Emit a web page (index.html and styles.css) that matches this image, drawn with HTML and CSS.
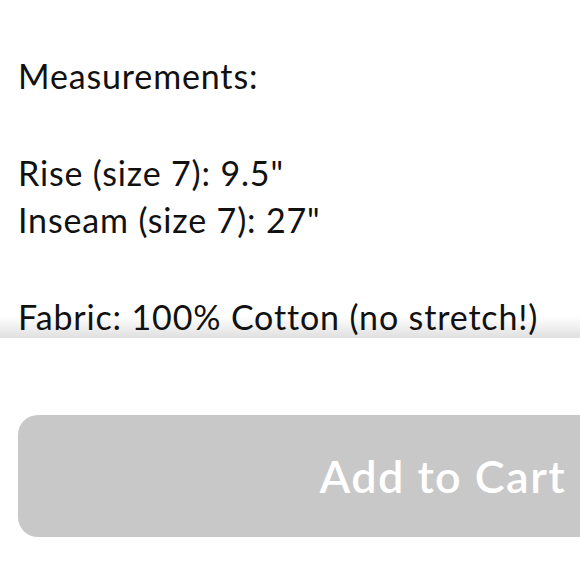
FILE: index.html
```html
<!DOCTYPE html>
<html>
<head>
<meta charset="utf-8">
<link rel="stylesheet" href="styles.css">
</head>
<body>
<div class="screen">
  <div class="details">
    <p class="para">Measurements:</p>
    <p class="para">Rise (size 7): 9.5"<br>Inseam (size 7): 27"</p>
    <p class="para">Fabric: 100% Cotton (no stretch!)</p>
  </div>
  <div class="footer">
    <button class="cart-btn">Add to Cart</button>
  </div>
</div>
</body>
</html>
```
FILE: styles.css
```css
html, body {
  margin: 0;
  padding: 0;
  background: #ffffff;
}
.screen {
  width: 580px;
  height: 580px;
  overflow: hidden;
  display: flex;
  flex-direction: column;
  font-family: Lato, "Noto Sans", sans-serif;
}
.details {
  height: 338px;
  flex: none;
  overflow: hidden;
  padding: 52px 0 0 18px;
  box-sizing: border-box;
  color: #111111;
  font-size: 34px;
  letter-spacing: 0.85px;
  line-height: 47px;
  background: #ffffff linear-gradient(to bottom, rgba(232,232,232,0), rgba(224,224,224,1)) no-repeat left bottom / 100% 22px;
}
.para {
  margin: 0 0 50px 0;
}
.footer {
  flex: 1;
  padding: 77px 0 0 18px;
  box-sizing: border-box;
}
.cart-btn {
  display: flex;
  align-items: center;
  justify-content: flex-end;
  width: 600px;
  height: 122px;
  border: none;
  border-radius: 20px;
  background: #c8c8c8;
  color: #ffffff;
  font-family: Lato, "Noto Sans", sans-serif;
  font-weight: 600;
  font-size: 45px;
  letter-spacing: 1.4px;
  padding: 0 52px 0 0;
  margin: 0;
  box-sizing: border-box;
}
```
